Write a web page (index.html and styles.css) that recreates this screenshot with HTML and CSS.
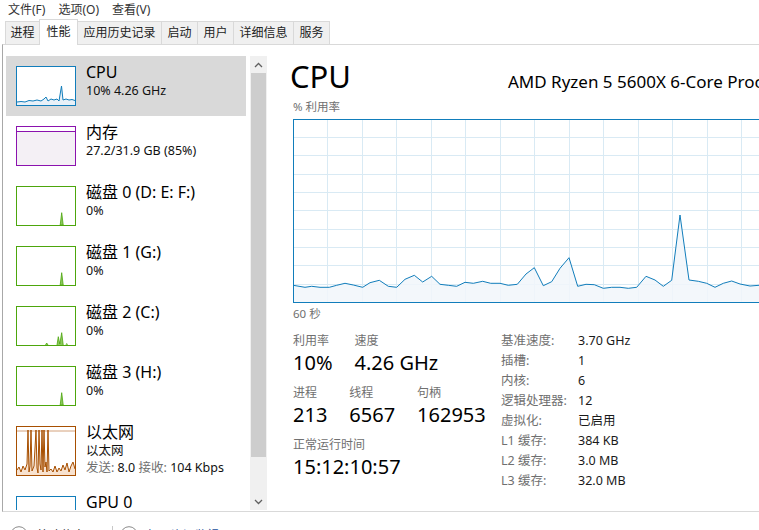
FILE: index.html
```html
<!DOCTYPE html>
<html lang="zh-CN">
<head>
<meta charset="utf-8">
<title>任务管理器</title>
<link rel="stylesheet" href="styles.css">
</head>
<body>
<div class="menubar"><span>文件(F)</span><span>选项(O)</span><span>查看(V)</span></div>
<div class="tabs">
  <div class="tab">进程</div>
  <div class="tab active">性能</div>
  <div class="tab">应用历史记录</div>
  <div class="tab">启动</div>
  <div class="tab">用户</div>
  <div class="tab">详细信息</div>
  <div class="tab">服务</div>
</div>
<div class="panel">
  <div class="sidebar">
    <div class="list">
      <div class="item selected">
        <svg class="thumb" viewBox="0 0 60 40"><rect x="0.5" y="0.5" width="59" height="39" fill="#fff" stroke="#117dbb"/><polygon fill="#e8f1f8" points="1,36 5,35.5 9,36 13,34.5 17,35 21,34 25,35 28,33 30,31 32,35 35,33 38,34 41,33 43,35 45.5,20 47,34 50,33 53,34 56,33.5 59,34.5 59,39 1,39"/><polyline fill="none" stroke="#117dbb" stroke-width="1" points="1,36 5,35.5 9,36 13,34.5 17,35 21,34 25,35 28,33 30,31 32,35 35,33 38,34 41,33 43,35 45.5,20 47,34 50,33 53,34 56,33.5 59,34.5"/></svg>
        <div class="info"><div class="name">CPU</div><div class="sub">10% 4.26 GHz</div></div>
      </div>
      <div class="item">
        <svg class="thumb" viewBox="0 0 60 40"><rect x="0.5" y="0.5" width="59" height="39" fill="#fff" stroke="#8b12ae"/><rect x="1" y="5.5" width="58" height="33.5" fill="#f4f0f5"/><line x1="1" y1="5.5" x2="59" y2="5.5" stroke="#8b12ae"/></svg>
        <div class="info"><div class="name">内存</div><div class="sub">27.2/31.9 GB (85%)</div></div>
      </div>
      <div class="item">
        <svg class="thumb" viewBox="0 0 60 40"><rect x="0.5" y="0.5" width="59" height="39" fill="#fff" stroke="#4da60c"/><polygon points="44.2,39 45.7,26.7 47.2,39" fill="#8cc85e" stroke="#4da60c" stroke-width="0.8"/></svg>
        <div class="info"><div class="name">磁盘 0 (D: E: F:)</div><div class="sub">0%</div></div>
      </div>
      <div class="item">
        <svg class="thumb" viewBox="0 0 60 40"><rect x="0.5" y="0.5" width="59" height="39" fill="#fff" stroke="#4da60c"/><polygon points="44.2,39 45.7,26.7 47.2,39" fill="#8cc85e" stroke="#4da60c" stroke-width="0.8"/></svg>
        <div class="info"><div class="name">磁盘 1 (G:)</div><div class="sub">0%</div></div>
      </div>
      <div class="item">
        <svg class="thumb" viewBox="0 0 60 40"><rect x="0.5" y="0.5" width="59" height="39" fill="#fff" stroke="#4da60c"/><polyline points="29.5,39 30.7,37 32,39" fill="#8cc85e" stroke="#4da60c" stroke-width="0.8"/><polyline points="41,39 42.3,30.7 43.8,38 45.7,26.7 47.2,39" fill="#8cc85e" stroke="#4da60c" stroke-width="0.8"/><polyline points="50,39 50.7,37.5 51.5,39" fill="none" stroke="#4da60c" stroke-width="0.8"/></svg>
        <div class="info"><div class="name">磁盘 2 (C:)</div><div class="sub">0%</div></div>
      </div>
      <div class="item">
        <svg class="thumb" viewBox="0 0 60 40"><rect x="0.5" y="0.5" width="59" height="39" fill="#fff" stroke="#4da60c"/><polygon points="44.2,39 45.7,26.7 47.2,39" fill="#8cc85e" stroke="#4da60c" stroke-width="0.8"/></svg>
        <div class="info"><div class="name">磁盘 3 (H:)</div><div class="sub">0%</div></div>
      </div>
      <div class="item tall">
        <svg class="thumb thumb-tall" viewBox="0 0 60 50"><rect x="0.5" y="0.5" width="59" height="49" fill="#fff" stroke="#a74f01"/><polygon fill="#f8e2cf" points="1,44 3,41 5,46 7,40 9,44 11,38 12,4 13,46 14,40 15,4 16,45 18,40 20,4 21,42 22,47 23,4 24,38 25,44 26,4 27,46 28,4 29,41 30,36 31,46 32,4 33,45 35,43 37,46 39,40 41,46 43,42 45,45 47,39 49,44 51,37 53,46 55,40 57,36 59,43 59,49 1,49"/><line x1="1" y1="5" x2="59" y2="5" stroke="#c98a5a" stroke-width="0.8"/><polyline fill="none" stroke="#a74f01" stroke-width="1" points="1,44 3,41 5,46 7,40 9,44 11,38 12,4 13,46 14,40 15,4 16,45 18,40 20,4 21,42 22,47 23,4 24,38 25,44 26,4 27,46 28,4 29,41 30,36 31,46 32,4 33,45 35,43 37,46 39,40 41,46 43,42 45,45 47,39 49,44 51,37 53,46 55,40 57,36 59,43"/></svg>
        <div class="info"><div class="name">以太网</div><div class="sub">以太网</div><div class="sub"><span class="k">发送:</span> 8.0 <span class="k">接收:</span> 104 Kbps</div></div>
      </div>
      <div class="item">
        <svg class="thumb" viewBox="0 0 60 40"><rect x="0.5" y="0.5" width="59" height="39" fill="#fff" stroke="#117dbb"/></svg>
        <div class="info"><div class="name">GPU 0</div></div>
      </div>
    </div>
    <div class="scrollbar">
      <div class="sb-arrow"><svg width="9" height="6" viewBox="0 0 9 6"><polyline points="1,5 4.5,1.5 8,5" fill="none" stroke="#606060" stroke-width="1.3"/></svg></div>
      <div class="sb-thumb"></div>
      <div class="sb-track"></div>
      <div class="sb-arrow"><svg width="9" height="6" viewBox="0 0 9 6"><polyline points="1,1 4.5,4.5 8,1" fill="none" stroke="#606060" stroke-width="1.3"/></svg></div>
    </div>
  </div>
  <div class="detail">
    <div class="head">
      <div class="title">CPU</div>
      <div class="model">AMD Ryzen 5 5600X 6-Core Processor</div>
    </div>
    <div class="caption">% 利用率</div>
    <svg class="graph" viewBox="0 0 690 184" width="690" height="184">
      <rect x="0" y="0" width="690" height="184" fill="#fff"/>
      <path shape-rendering="crispEdges" stroke="#d9eaf4" stroke-width="1" fill="none" d="M34.5 0V184M69.5 0V184M103.5 0V184M138.5 0V184M172.5 0V184M207.5 0V184M241.5 0V184M276.5 0V184M310.5 0V184M345.5 0V184M379.5 0V184M414.5 0V184M448.5 0V184M483.5 0V184M517.5 0V184M552.5 0V184M586.5 0V184M621.5 0V184M655.5 0V184M0 18.5H690M0 36.5H690M0 55.5H690M0 73.5H690M0 91.5H690M0 110.5H690M0 128.5H690M0 146.5H690M0 165.5H690"/>
      <polygon fill="#f1f6fa" fill-opacity="0.85" points="0.3,166.3 12,168.3 18.7,167.3 27,168.3 36.3,168.3 43.7,166.3 52,164.3 60.3,166 69.7,168.3 77,163.7 86.3,161.3 95.3,167.3 103.7,168.3 112,160.3 121.3,156.3 129.7,163 138.7,157.3 147,165.3 155.3,166.3 163.7,167.3 172,163.3 180.3,164.3 189.7,162.3 197.7,164.3 207,164.3 215.3,166.3 224.3,165.3 233,155 241.3,148.7 250.3,166.7 258.7,162.7 267,149.3 276,138.7 284.7,167.3 293,165.3 301.3,165.7 310.3,169.3 318.7,168.3 327,168.3 335.3,169.3 343.7,168.3 353,157.3 362,161 370.3,167.3 378.7,161.3 387,96 396,161 405.3,162.3 413.7,164.3 422,168.3 430.3,164.3 438.7,162 447,165 457,167 466,166.3 475,165 484,167 493,166 502,164 511,167 520,166 690,166 690,183 0.3,183"/>
      <polyline fill="none" stroke="#117dbb" stroke-width="1" stroke-linejoin="round" points="0.3,166.3 12,168.3 18.7,167.3 27,168.3 36.3,168.3 43.7,166.3 52,164.3 60.3,166 69.7,168.3 77,163.7 86.3,161.3 95.3,167.3 103.7,168.3 112,160.3 121.3,156.3 129.7,163 138.7,157.3 147,165.3 155.3,166.3 163.7,167.3 172,163.3 180.3,164.3 189.7,162.3 197.7,164.3 207,164.3 215.3,166.3 224.3,165.3 233,155 241.3,148.7 250.3,166.7 258.7,162.7 267,149.3 276,138.7 284.7,167.3 293,165.3 301.3,165.7 310.3,169.3 318.7,168.3 327,168.3 335.3,169.3 343.7,168.3 353,157.3 362,161 370.3,167.3 378.7,161.3 387,96 396,161 405.3,162.3 413.7,164.3 422,168.3 430.3,164.3 438.7,162 447,165 457,167 466,166.3 475,165 484,167 493,166 502,164 511,167 520,166 690,166"/>
      <rect x="0.5" y="0.5" width="689" height="183" fill="none" stroke="#117dbb" stroke-width="1"/>
    </svg>
    <div class="axis">60 秒</div>
    <div class="stats">
      <div class="stats-left">
        <div class="row">
          <div class="stat"><div class="label">利用率</div><div class="value">10%</div></div>
          <div class="stat"><div class="label">速度</div><div class="value">4.26 GHz</div></div>
        </div>
        <div class="row">
          <div class="stat"><div class="label">进程</div><div class="value">213</div></div>
          <div class="stat"><div class="label">线程</div><div class="value">6567</div></div>
          <div class="stat"><div class="label">句柄</div><div class="value">162953</div></div>
        </div>
        <div class="row">
          <div class="stat"><div class="label">正常运行时间</div><div class="value">15:12:10:57</div></div>
        </div>
      </div>
      <div class="specs">
        <div class="k">基准速度:</div><div class="v">3.70 GHz</div>
        <div class="k">插槽:</div><div class="v">1</div>
        <div class="k">内核:</div><div class="v">6</div>
        <div class="k">逻辑处理器:</div><div class="v">12</div>
        <div class="k">虚拟化:</div><div class="v">已启用</div>
        <div class="k">L1 缓存:</div><div class="v">384 KB</div>
        <div class="k">L2 缓存:</div><div class="v">3.0 MB</div>
        <div class="k">L3 缓存:</div><div class="v">32.0 MB</div>
      </div>
    </div>
  </div>
</div>
<div class="bottombar">
  <div class="link plain"><svg class="circle" width="18" height="18" viewBox="0 0 18 18"><circle cx="9" cy="9" r="8.3" fill="#fff" stroke="#8a8a8a"/><polyline points="5.5,10.5 9,7 12.5,10.5" fill="none" stroke="#555" stroke-width="1.2"/></svg><span>简略信息(D)</span></div>
  <div class="sep"></div>
  <div class="link"><svg class="circle" width="18" height="18" viewBox="0 0 18 18"><circle cx="9" cy="9" r="8.3" fill="#fff" stroke="#8a8a8a"/><path d="M5 11a4 4 0 0 1 8 0" fill="none" stroke="#555"/></svg><span>打开资源监视器</span></div>
</div>
</body>
</html>
```
FILE: styles.css
```css
* { box-sizing: content-box; }
html, body {
  margin: 0;
  padding: 0;
}
body {
  width: 759px;
  height: 530px;
  overflow: hidden;
  background: #fff;
  color: #000;
  font-family: "Noto Sans", "Noto Sans CJK SC", sans-serif;
}

.menubar {
  height: 20px;
  display: flex;
  gap: 13px;
  padding-left: 8px;
  font-size: 12px;
  line-height: 19px;
  color: #333;
}

.tabs {
  display: flex;
  align-items: flex-end;
  height: 24px;
  padding-left: 5px;
  position: relative;
  z-index: 1;
}
.tab {
  height: 22px;
  line-height: 22px;
  padding: 0 5.5px;
  border: 1px solid #d9d9d9;
  border-bottom: 0;
  background: #f0f0f0;
  font-size: 12px;
  color: #222;
  margin-left: -1px;
  white-space: nowrap;
}
.tab:first-child { margin-left: 0; padding: 0 4.5px; }
.tab.active {
  background: #fff;
  height: 25px;
  line-height: 23px;
  margin-bottom: -1px;
  padding: 0 6.5px;
  position: relative;
  z-index: 2;
}

.panel {
  margin-left: 2px;
  width: 900px;
  height: 455px;
  border: 1px solid #d9d9d9;
  border-left-color: #a8a8a8;
  padding: 11px 0 0 3px;
  display: flex;
  align-items: flex-start;
}

.sidebar {
  display: flex;
  gap: 4px;
  height: 454px;
  flex: none;
}
.list {
  width: 240px;
  height: 454px;
  overflow: hidden;
}
.item {
  height: 60px;
  display: flex;
  align-items: flex-start;
}
.item.tall { height: 70px; }
.item.selected { background: #d9d9d9; }
.thumb {
  display: block;
  width: 60px;
  height: 40px;
  margin: 10px 10px 0 10px;
  flex: none;
}
.thumb.thumb-tall { height: 50px; }
.info {
  padding-top: 6px;
  white-space: nowrap;
}
.name {
  font-size: 16px;
  line-height: 20px;
  color: #000;
}
.sub {
  font-size: 12.5px;
  line-height: 17px;
  color: #111;
}
.sub .k { color: #707070; }

.scrollbar {
  width: 17px;
  height: 454px;
  background: #f0f0f0;
  display: flex;
  flex-direction: column;
}
.sb-arrow {
  height: 17px;
  flex: none;
  display: flex;
  align-items: center;
  justify-content: center;
}
.sb-thumb {
  height: 384px;
  margin: 0 1px;
  background: #cdcdcd;
  flex: none;
}
.sb-track { flex: 1; }

.detail {
  margin-left: 26px;
  padding-top: 2px;
  width: 700px;
  flex: none;
}
.head {
  display: flex;
  align-items: baseline;
  height: 36px;
  white-space: nowrap;
}
.title {
  width: 218px;
  margin-left: -3px;
  font-size: 31px;
  line-height: 36px;
  flex: none;
  color: #000;
}
.model {
  font-size: 17px;
  line-height: 36px;
  color: #000;
}
.caption {
  margin-top: 5px;
  font-size: 11.5px;
  line-height: 16px;
  color: #707070;
}
.graph {
  display: block;
  margin-top: 4px;
  width: 690px;
  height: 184px;
}
.axis {
  margin-top: 3px;
  font-size: 11.5px;
  line-height: 16px;
  color: #707070;
}

.stats {
  display: flex;
  margin-top: 9px;
}
.stats-left {
  width: 208px;
  padding-top: 2px;
  flex: none;
}
.row {
  display: flex;
  gap: 22px;
  margin-bottom: 8px;
  white-space: nowrap;
}
.stat .label {
  font-size: 12px;
  line-height: 16px;
  color: #707070;
}
.stat .value {
  font-size: 20px;
  line-height: 28px;
  color: #000;
}

.specs {
  display: grid;
  grid-template-columns: 77px auto;
  font-size: 12.5px;
  line-height: 20px;
  white-space: nowrap;
}
.specs .k { color: #707070; }
.specs .v { color: #1a1a1a; }

.bottombar {
  display: flex;
  align-items: center;
  padding: 14px 0 0 10px;
  font-size: 12px;
  color: #1a4f9c;
}
.link {
  display: flex;
  align-items: center;
  gap: 9px;
  height: 18px;
}
.link.plain { color: #1a1a1a; }
.circle { display: block; flex: none; }
.sep {
  width: 1px;
  height: 18px;
  background: #c8c8c8;
  margin: 0 7px 0 11px;
}
```
